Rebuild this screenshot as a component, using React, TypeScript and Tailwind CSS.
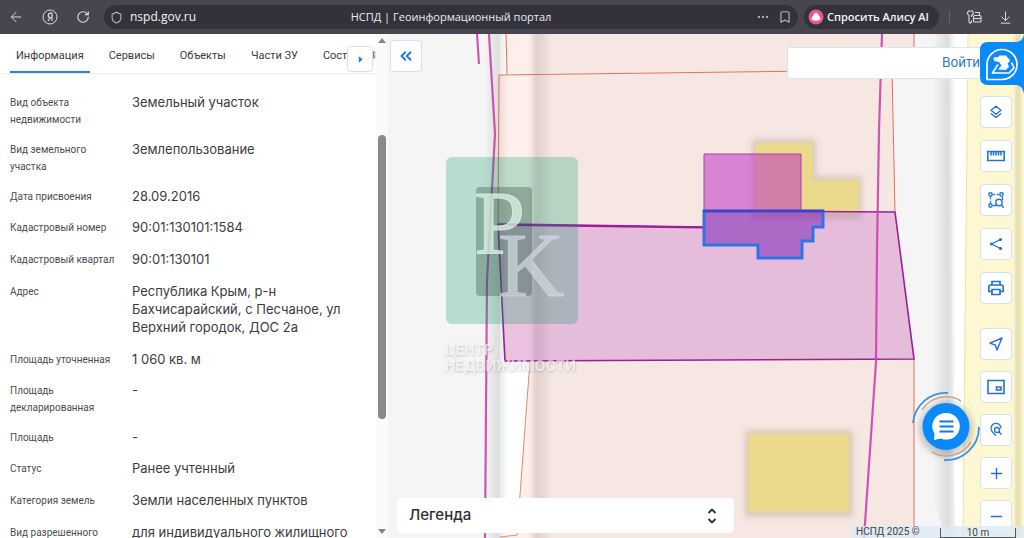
import React, { useState } from 'react';
import { ArrowDownToLine, ArrowLeft, Bookmark, ChevronsLeft, Ellipsis, Minus, Plus, RotateCw, Shield } from 'lucide-react';

interface InfoRow {
  label: string;
  value: string;
  roomy?: boolean;
}

const TABS = ['Информация', 'Сервисы', 'Объекты', 'Части ЗУ', 'Состав ЕЗП'];

const ROWS: InfoRow[] = [
  { label: 'Вид объекта недвижимости', value: 'Земельный участок' },
  { label: 'Вид земельного участка', value: 'Землепользование' },
  { label: 'Дата присвоения', value: '28.09.2016' },
  { label: 'Кадастровый номер', value: '90:01:130101:1584', roomy: true },
  { label: 'Кадастровый квартал', value: '90:01:130101', roomy: true },
  { label: 'Адрес', value: 'Республика Крым, р-н Бахчисарайский, с Песчаное, ул Верхний городок, ДОС 2а', roomy: true },
  { label: 'Площадь уточненная', value: '1 060 кв. м' },
  { label: 'Площадь декларированная', value: '-' },
  { label: 'Площадь', value: '-' },
  { label: 'Статус', value: 'Ранее учтенный', roomy: true },
  { label: 'Категория земель', value: 'Земли населенных пунктов', roomy: true },
  { label: 'Вид разрешенного использования', value: 'для индивидуального жилищного строительства' },
];

const BrowserBar: React.FC = () => (
  <header className="flex h-[34px] shrink-0 items-center bg-[#47464f] font-['Open_Sans','Noto_Sans',sans-serif] text-[#d9d9de]">
    <nav className="flex w-[104px] shrink-0 items-center gap-[18px] pl-2">
      <button aria-label="Назад">
        <ArrowLeft className="h-4 w-4" strokeWidth={1.5} />
      </button>
      <button aria-label="Яндекс">
        <svg viewBox="0 0 16 16" className="h-4 w-4" fill="none" stroke="currentColor">
          <circle cx="8" cy="8" r="7" />
          <path d="M10 12V4.200H8.500a2.200 2.200 0 0 0 0 4.400H10M8.300 8.600L6 12" strokeWidth="1.200" />
        </svg>
      </button>
      <button aria-label="Обновить">
        <RotateCw className="h-[14px] w-[14px]" strokeWidth={2} />
      </button>
    </nav>
    <div className="grid h-6 min-w-0 flex-1 grid-cols-[1fr_auto_1fr] items-center rounded-full bg-[#33323b] px-[6px] text-[12px]">
      <div className="flex items-center gap-[7px]">
        <Shield className="h-[13px] w-[13px] text-[#b4b4bc]" />
        <span className="text-[#f4f4f6]">nspd.gov.ru</span>
      </div>
      <span className="text-[11px] font-medium text-[#ececf0]">НСПД | Геоинформационный портал</span>
      <div className="flex items-center justify-end gap-2 text-[#b4b4bc]">
        <button aria-label="Ещё">
          <Ellipsis className="h-[14px] w-[14px]" />
        </button>
        <button aria-label="В закладки">
          <Bookmark className="h-[14px] w-[14px]" />
        </button>
      </div>
    </div>
    <button className="ml-[6px] flex h-6 w-[135px] shrink-0 items-center gap-[3px] rounded-full bg-[#33323b] pl-1 text-[11px] font-semibold whitespace-nowrap text-[#f4f4f6]">
      <svg viewBox="0 0 16 16" className="h-4 w-4 shrink-0">
        <circle cx="8" cy="8" r="7.5" fill="#e8588f" />
        <path d="M8 3.800c1.200 0 1.800 1.200 2.600 2.500.8 1.300 1.800 2.100 1.800 3.300 0 1.700-2 2.200-4.400 2.200s-4.400-.5-4.400-2.200c0-1.200 1-2 1.800-3.300C6.200 5 6.800 3.800 8 3.800z" fill="#fff" />
      </svg>
      Спросить Алису AI
    </button>
    <div className="flex w-[85px] shrink-0 items-center justify-between pr-[11px] pl-[10px]">
      <span className="h-3 w-px bg-[#66656e]" />
      <button aria-label="Пароли">
        <svg viewBox="0 0 16 16" className="h-4 w-4" fill="none" stroke="currentColor" strokeWidth="1.100">
          <path d="M5.500 8V6.500L7.500 4.500 6.500 2H2.500L1.200 4.500 3 6.500V13l1.200 1.200L5.500 13V11.500M9 3.500h4.500V6" />
          <rect x="7.500" y="6.500" width="7.500" height="6.500" rx="1" />
          <path d="M7.500 9.500H15" />
        </svg>
      </button>
      <button aria-label="Загрузки">
        <ArrowDownToLine className="h-[15px] w-[15px]" strokeWidth={1.6} />
      </button>
    </div>
  </header>
);

const InfoPanel: React.FC = () => {
  const [active, setActive] = useState(TABS[0]);

  return (
    <aside className="flex w-[388px] shrink-0 overflow-hidden bg-white">
      <div className="relative min-w-0 flex-1">
        <div
          role="tablist"
          className="flex h-[40px] items-stretch gap-[13px] overflow-hidden border-b border-[#ececee] pl-[10px] font-['Roboto','Noto_Sans',sans-serif] text-[11px] text-[#3a3a3f]"
        >
          {TABS.map((tab) => (
            <button
              key={tab}
              role="tab"
              aria-selected={tab === active}
              onClick={() => setActive(tab)}
              className={`shrink-0 border-b-2 px-[6px] pt-3 pb-1 ${tab === active ? 'border-[#2f80e4]' : 'border-transparent'}`}
            >
              {tab}
            </button>
          ))}
        </div>
        <button
          aria-label="Следующие вкладки"
          className="absolute top-3 right-[3px] flex h-[26px] w-[26px] items-center justify-center rounded border border-[#d3e3f2] bg-white"
        >
          <svg viewBox="0 0 6 8" className="h-[7px] w-[5px]">
            <path d="M1 0l4.500 4L1 8z" fill="#1f78d8" />
          </svg>
        </button>

        <table className="mt-[19px] table-fixed text-left text-[#3b3c40]">
          <tbody>
            {ROWS.map((row) => (
              <tr key={row.label} className="align-top">
                <th
                  scope="row"
                  className="w-[132px] pt-px pr-3 pb-3 pl-[10px] font-['Roboto','Noto_Sans',sans-serif] text-[10px] leading-[17px] font-normal text-[#4b4c52]"
                >
                  {row.label}
                </th>
                <td className={`w-[224px] text-[13px] leading-[18px] ${row.roomy ? 'pb-[14px]' : 'pb-[13px]'}`}>{row.value}</td>
              </tr>
            ))}
          </tbody>
        </table>
      </div>

      {/* Scroll track */}
      <div className="flex w-3 shrink-0 flex-col items-center justify-between bg-[#fafafa] py-1">
        <svg viewBox="0 0 8 5" className="h-[5px] w-2">
          <path d="M0 5l4-5 4 5z" fill="#858585" />
        </svg>
        <div className="flex w-full flex-1 flex-col items-center">
          <div className="basis-[92px]" />
          <div className="h-[284px] w-2 rounded-full bg-[#898989]" />
        </div>
        <svg viewBox="0 0 8 5" className="h-[5px] w-2">
          <path d="M0 0l4 5 4-5z" fill="#858585" />
        </svg>
      </div>
    </aside>
  );
};

const ParcelMap: React.FC = () => (
  <svg
    viewBox="388 34 636 504"
    preserveAspectRatio="xMinYMin slice"
    className="absolute inset-0 h-full w-full"
    role="img"
    aria-label="Карта участка"
  >
    <defs>
      <filter id="soft" x="-20%" y="-20%" width="140%" height="140%">
        <feGaussianBlur stdDeviation="3" />
      </filter>
      <filter id="edge" x="-20%" y="-20%" width="140%" height="140%">
        <feGaussianBlur stdDeviation="1.3" />
      </filter>
      <filter id="letter" x="-10%" y="-30%" width="120%" height="160%">
        <feDropShadow dx="0.5" dy="1" stdDeviation="1" floodColor="#777" floodOpacity="0.7" />
      </filter>
      <linearGradient id="roadLeft">
        <stop offset="0" stopColor="#8f9296" stopOpacity="0" />
        <stop offset="0.6" stopColor="#8f9296" stopOpacity="0.24" />
        <stop offset="1" stopColor="#8f9296" stopOpacity="0" />
      </linearGradient>
      <linearGradient id="roadRight">
        <stop offset="0" stopColor="#8a8080" stopOpacity="0" />
        <stop offset="0.4" stopColor="#8a8080" stopOpacity="0.24" />
        <stop offset="1" stopColor="#8a8080" stopOpacity="0" />
      </linearGradient>
    </defs>

    <rect x="388" y="34" width="636" height="504" fill="#f5f5f5" />

    {/* Roads */}
    <rect x="500" y="34" width="33" height="504" fill="#fff" />
    <rect x="484" y="34" width="24" height="504" fill="url(#roadLeft)" />
    <rect x="528" y="34" width="24" height="504" fill="url(#roadRight)" />
    <path d="M950 34H970V538H954z" fill="#fff" />
    <path d="M933 34H955V490L957 538H946L933 500z" fill="url(#roadLeft)" />
    <path d="M968 34H1024V538H963z" fill="#fdf7d2" />
    <path d="M968 34L963 538" stroke="#efe3a4" fill="none" />
    <path d="M1015 34H1021V538H1015z" fill="#d9d0a0" opacity="0.6" filter="url(#edge)" />

    {/* Neighbouring parcels */}
    <g fill="#faaf9b" fillOpacity="0.2">
      <path d="M506 34L507 74L892 70L914 69V34z" />
      <path d="M499 75L892 70L895 212H704V227L498 224z" />
      <path d="M530 361L914 359V538H500L517 535z" />
      <path d="M498 224L704 227V211L895 212L914 359L505 361z" />
    </g>

    {/* Buildings */}
    <path d="M752 139H816V176H862V219H752z" fill="#a89a80" opacity="0.38" filter="url(#soft)" />
    <path d="M755 143H813V180H859V214H755z" fill="#ebd98c" filter="url(#edge)" />
    <path d="M745 430H853V517H745z" fill="#a89a80" opacity="0.38" filter="url(#soft)" />
    <path d="M748 434H849V512H748z" fill="#ebd98c" filter="url(#edge)" />

    <g fill="none" stroke="#e4715c">
      <path d="M506 34L507 74M499 75L892 70M499 75L498 224M892 70L895 212M914 34V69M914 359V538" />
      <path d="M530 361L517 535L500 537" stroke="#df8a70" />
    </g>

    {/* Selected parcel */}
    <path d="M498 224L704 227V211L895 212L914 359L505 361z" fill="#b240c3" fillOpacity="0.25" />
    <path d="M704 154H801V211H704z" fill="#ba21c3" fillOpacity="0.5" stroke="#a93fa6" strokeWidth="1" />
    <path d="M498 224L704 227M704 211L895 212L914 359L505 361L498 224" fill="none" stroke="#9a1f9e" strokeWidth="1.6" />
    <path d="M510 225L704 227.5" stroke="#9a1f9e" strokeWidth="2" />

    {/* Zone borders */}
    <g fill="none" stroke="#c93aaa" strokeWidth="2.2" strokeOpacity="0.85">
      <path d="M477 34L479 64" />
      <path d="M489 34L495 134L487 280L485 538" />
      <path d="M882 34L879 130L877 250L876 362L864 538" />
    </g>

    <path
      d="M704 211H823V227H813V241H802V258H758V245H704z"
      fill="#7515b1"
      fillOpacity="0.5"
      stroke="#2e74e6"
      strokeWidth="3"
    />
    <path d="M703 211H824" stroke="#4a3fc4" strokeWidth="2.5" />

    {/* Agency mark */}
    <rect x="446" y="157" width="132" height="167" rx="6" fill="#00995e" fillOpacity="0.25" />
    <rect x="476" y="187" width="56" height="109" rx="4" fill="#2d4a44" fillOpacity="0.33" />
    <g fontFamily="'Liberation Serif', serif" fontSize="92" fillOpacity="0.75" strokeOpacity="0.75">
      <text x="474" y="254" fill="#dcf3e3" stroke="#dcf3e3">P</text>
      <text x="498" y="296" fill="#ccd5dc" stroke="#ccd5dc">K</text>
    </g>
    <g fontFamily="Inter, sans-serif" fontSize="14" fontWeight="700" fill="#fff" fillOpacity="0.55" filter="url(#letter)">
      <text x="445" y="355">ЦЕНТР</text>
      <text x="445" y="371">НЕДВИЖИМОСТИ</text>
    </g>
  </svg>
);

const ToolButton: React.FC<{ label: string; children: React.ReactNode }> = ({ label, children }) => (
  <button
    aria-label={label}
    className="flex h-8 w-8 items-center justify-center rounded-sm border border-[#d3e3ee] bg-white text-[#2272d3]"
  >
    {children}
  </button>
);

const Glyph: React.FC<{ children: React.ReactNode }> = ({ children }) => (
  <svg viewBox="0 0 20 20" className="h-5 w-5" fill="none" stroke="currentColor" strokeWidth="1.4">
    {children}
  </svg>
);

const Toolbar: React.FC = () => (
  <div className="flex flex-col gap-6">
    <div className="flex flex-col gap-3">
      <ToolButton label="Слои">
        <Glyph>
          <path d="M10 4.200l5 4-5 4-5-4zM5 11.500l5 4 5-4" strokeLinejoin="round" />
        </Glyph>
      </ToolButton>
      <ToolButton label="Измерения">
        <Glyph>
          <path d="M1.800 5.500h16.400v9H1.800zM5 5.500v4M7.500 5.500v4M10 5.500v4M12.500 5.500v4M15 5.500v4" strokeWidth="1.600" />
        </Glyph>
      </ToolButton>
      <ToolButton label="Поиск по области">
        <Glyph>
          <g strokeWidth="1.400">
            <circle cx="4.500" cy="4.500" r="1.700" />
            <circle cx="15.500" cy="4.500" r="1.700" />
            <circle cx="4.500" cy="15.500" r="1.700" />
            <circle cx="13" cy="12.500" r="3.200" />
            <path d="M15.200 15l2.600 2.800M7.200 4.500h2M10.800 4.500h2M4.500 7.200v2M4.500 10.800v2M16.500 7v3M7.200 15.500h3.500" />
          </g>
        </Glyph>
      </ToolButton>
      <ToolButton label="Поделиться">
        <Glyph>
          <path d="M14.500 5.500L5.500 10l9 4.500" strokeWidth="1.300" />
          <g fill="currentColor" stroke="none">
            <circle cx="14.500" cy="5.500" r="1.600" />
            <circle cx="5.500" cy="10" r="1.600" />
            <circle cx="14.500" cy="14.500" r="1.600" />
          </g>
        </Glyph>
      </ToolButton>
      <ToolButton label="Печать">
        <Glyph>
          <path d="M6 7V3.500h8V7M6 13.500H2.800V9q0-2 2-2h10.400q2 0 2 2v4.500H14M6 11.500h8v5H6z" strokeWidth="1.700" />
        </Glyph>
      </ToolButton>
    </div>
    <div className="flex flex-col gap-[11px]">
      <ToolButton label="Моё местоположение">
        <Glyph>
          <path d="M16 4L11 16 9.300 11 3.800 9.200z" strokeLinejoin="round" />
        </Glyph>
      </ToolButton>
      <ToolButton label="Мини-карта">
        <Glyph>
          <path d="M2 3.500h16v13H2zM10.500 10h4.500v3h-4.500z" strokeWidth="1.600" />
        </Glyph>
      </ToolButton>
      <ToolButton label="Поиск по точке">
        <Glyph>
          <path d="M15 8.500A5 5 0 1 0 5.500 10.500C6.500 13 8.500 14 10 15.500" strokeWidth="1.300" />
          <circle cx="11" cy="10" r="2.500" strokeWidth="1.300" />
          <path d="M12.800 11.800l2.700 3" strokeWidth="1.300" />
        </Glyph>
      </ToolButton>
      <ToolButton label="Приблизить">
        <Plus className="h-[17px] w-[17px]" strokeWidth={2} />
      </ToolButton>
      <ToolButton label="Отдалить">
        <Minus className="h-[17px] w-[17px]" strokeWidth={2} />
      </ToolButton>
    </div>
  </div>
);

const ChatButton: React.FC = () => (
  <button aria-label="Чат" className="absolute right-[42px] bottom-[77px] h-[72px] w-[72px]">
    <svg viewBox="0 0 72 72" className="h-full w-full overflow-visible" fill="none">
      <circle cx="36" cy="40" r="27" fill="#555" opacity="0.3" filter="url(#soft)" />
      <path d="M3 34A33 33 0 0 1 38 4M69 38A33 33 0 0 1 34 71" stroke="#3b92e0" strokeWidth="1.8" />
      <path d="M12 21A28.5 28.5 0 0 1 51 12M61 53A28.5 28.5 0 0 1 22 63" stroke="#c9a58f" strokeWidth="1.5" />
      <circle cx="36" cy="37.5" r="23.5" fill="#0a8af9" />
      <path d="M36.500 24a13.300 13.300 0 1 1-5.500 25.400L24 51l.5-6.500A13.300 13.300 0 0 1 36.500 24z" fill="#fff" />
      <path d="M29.500 32.500h14M29.500 37.500h14M29.500 42.500h14" stroke="#0a7de8" strokeWidth="2" />
    </svg>
  </button>
);

const MapPane: React.FC = () => (
  <main className="relative min-w-0 flex-1 overflow-hidden">
    <ParcelMap />

    <button
      aria-label="Свернуть панель"
      className="absolute top-[6px] left-[2px] flex h-8 w-8 items-center justify-center rounded border border-[#d3e3f2] bg-white text-[#1f78e0]"
    >
      <ChevronsLeft className="h-[18px] w-[18px]" strokeWidth={2.5} />
    </button>

    <div className="absolute top-[13px] right-[44px] left-[399px] flex h-8 items-center justify-end border border-r-0 border-[#d9e6f0] bg-white">
      <a href="#login" className="text-[13px] text-[#2b74c9]">
        Войти
      </a>
    </div>

    {/* Assistant tab stuck to the window edge */}
    <button aria-label="Помощник" className="absolute top-0 right-0 h-[60px] w-11">
      <svg viewBox="0 0 44 60" className="h-full w-full" fill="none">
        <path d="M44 0C43 6 40 8 35 8H8Q0 8 0 16V43Q0 51 8 51H35C40 51 43 54 44 60z" fill="#0a8af9" />
        <path d="M7 45.500V30A15 15 0 1 1 22 45.500z" stroke="#fff" strokeWidth="1.700" strokeLinejoin="round" />
        <path d="M13.500 23.500L18 23l1.500-1.500H26l1.500 2L30 26l-1 2.500-1.500.5 1.500 4-3.500 3L18 35.500l3.500-4L19 28l-5-1z" fill="#fff" />
        <path d="M18 30.500L12.500 39H29L34 34 31.500 28.500" stroke="#fff" strokeWidth="1.700" strokeLinejoin="round" />
      </svg>
    </button>

    <div className="absolute top-[62px] right-3">
      <Toolbar />
    </div>

    <ChatButton />

    <button className="absolute bottom-[5px] left-[9px] flex h-[35px] w-[337px] items-center justify-between rounded-sm bg-white px-3 text-[15px] font-medium text-[#2e2f33]">
      Легенда
      <svg viewBox="0 0 10 16" className="mr-[5px] h-4 w-[10px]" fill="none" stroke="currentColor" strokeWidth="1.8">
        <path d="M1.500 5L5 1.500 8.500 5M1.500 11L5 14.500 8.500 11" />
      </svg>
    </button>

    <footer className="absolute right-0 bottom-0 flex h-3 w-[173px] items-end justify-between bg-[#dceaf5]/80 pr-2 pl-[5px] font-['Roboto','Noto_Sans',sans-serif] text-[10px] leading-3 text-[#3f4247]">
      <span>НСПД 2025 ©</span>
      <span className="h-[10px] w-[76px] border-x border-b border-[#55585e] text-center leading-[9px]">10 m</span>
    </footer>
  </main>
);

const App: React.FC = () => (
  <div className="flex h-screen flex-col overflow-hidden bg-white font-['Inter','Noto_Sans',sans-serif]">
    <BrowserBar />
    <div className="flex min-h-0 flex-1">
      <InfoPanel />
      <MapPane />
    </div>
  </div>
);

export default App;
